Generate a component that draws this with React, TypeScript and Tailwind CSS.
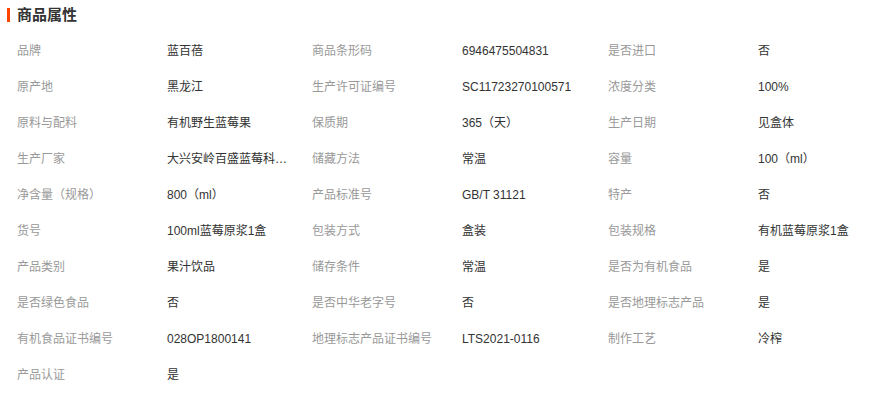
import React from "react";

const rows: [string, string][][] = [
  [["品牌", "蓝百蓓"], ["商品条形码", "6946475504831"], ["是否进口", "否"]],
  [["原产地", "黑龙江"], ["生产许可证编号", "SC11723270100571"], ["浓度分类", "100%"]],
  [["原料与配料", "有机野生蓝莓果"], ["保质期", "365（天）"], ["生产日期", "见盒体"]],
  [["生产厂家", "大兴安岭百盛蓝莓科技有限公司"], ["储藏方法", "常温"], ["容量", "100（ml）"]],
  [["净含量（规格）", "800（ml）"], ["产品标准号", "GB/T 31121"], ["特产", "否"]],
  [["货号", "100ml蓝莓原浆1盒"], ["包装方式", "盒装"], ["包装规格", "有机蓝莓原浆1盒"]],
  [["产品类别", "果汁饮品"], ["储存条件", "常温"], ["是否为有机食品", "是"]],
  [["是否绿色食品", "否"], ["是否中华老字号", "否"], ["是否地理标志产品", "是"]],
  [["有机食品证书编号", "028OP1800141"], ["地理标志产品证书编号", "LTS2021-0116"], ["制作工艺", "冷榨"]],
  [["产品认证", "是"]],
];

export default function App() {
  return (
    <div
      className="w-[873px] h-[413px] bg-white overflow-hidden"
      style={{ fontFamily: '"Liberation Sans", "Noto Sans CJK SC", sans-serif' }}
    >
      <div className="h-[33px] flex items-center pl-[7px] pb-[4px]">
        <div className="w-[3px] h-[14px] bg-[#ff4400]" />
        <div className="ml-[7px] text-[15px] font-bold text-[#333] leading-none">商品属性</div>
      </div>
      <div className="pl-[17px] text-[12px]">
        {rows.map((row, i) => (
          <div key={i} className="h-[36px] flex items-center">
            {row.map(([k, v], j) => (
              <div
                key={j}
                className={`flex items-center shrink-0 ${j === 0 ? "w-[295px]" : j === 1 ? "w-[296px]" : ""}`}
              >
                <div className="w-[150px] shrink-0 text-[#999] whitespace-nowrap">{k}</div>
                <div className="w-[128px] shrink-0 text-[#333] whitespace-nowrap overflow-hidden text-ellipsis">{v}</div>
              </div>
            ))}
          </div>
        ))}
      </div>
    </div>
  );
}
